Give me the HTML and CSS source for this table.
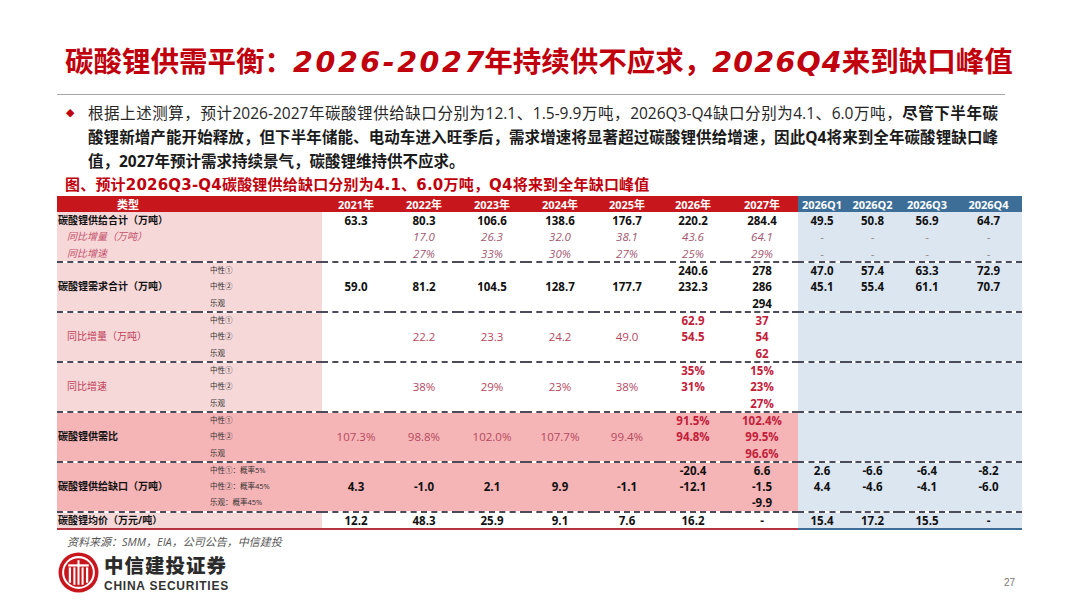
FILE: index.html
```html
<!DOCTYPE html>
<html lang="zh-CN">
<head>
<meta charset="utf-8">
<title>碳酸锂供需平衡</title>
<link rel="stylesheet" href="styles.css">
</head>
<body>
<div class="slide">
  <h1 class="title">碳酸锂供需平衡：<span class="num n1">2026-2027</span>年持续供不应求，<span class="num n2">2026Q4</span>来到缺口峰值</h1>
  <div class="rule"></div>
  <div class="bullet">
    <span class="dia">◆</span>
    <div class="lines">
      <span class="line">根据上述测算，预计2026-2027年碳酸锂供给缺口分别为12.1、1.5-9.9万吨，2026Q3-Q4缺口分别为4.1、6.0万吨，<b>尽管下半年碳</b></span>
      <span class="line"><b>酸锂新增产能开始释放，但下半年储能、电动车进入旺季后，需求增速将显著超过碳酸锂供给增速，因此Q4将来到全年碳酸锂缺口峰</b></span>
      <span class="line last"><b>值，2027年预计需求持续景气，碳酸锂维持供不应求。</b></span>
    </div>
  </div>
  <div class="caption">图、预计2026Q3-Q4碳酸锂供给缺口分别为4.1、6.0万吨，Q4将来到全年缺口峰值</div>
  <table class="tbl">
    <colgroup>
      <col class="c1"><col class="c2">
      <col class="y1"><col class="y1"><col class="y1"><col class="y1"><col class="y2"><col class="y2"><col class="y3">
      <col class="q1"><col class="q2"><col class="q3"><col class="q4">
    </colgroup>
    <thead>
      <tr>
        <th colspan="2" class="hr hl">类型</th>
        <th class="hr">2021年</th><th class="hr">2022年</th><th class="hr">2023年</th><th class="hr">2024年</th><th class="hr">2025年</th><th class="hr">2026年</th><th class="hr">2027年</th>
        <th class="hb">2026Q1</th><th class="hb">2026Q2</th><th class="hb">2026Q3</th><th class="hb">2026Q4</th>
      </tr>
    </thead>
    <tbody class="blk">
      <tr>
        <td colspan="2" class="lab b">碳酸锂供给合计（万吨）</td>
        <td class="b">63.3</td><td class="b">80.3</td><td class="b">106.6</td><td class="b">138.6</td><td class="b">176.7</td><td class="b">220.2</td><td class="b">284.4</td>
        <td class="q b">49.5</td><td class="q b">50.8</td><td class="q b">56.9</td><td class="q b">64.7</td>
      </tr>
      <tr>
        <td colspan="2" class="lab ind itl">同比增量（万吨）</td>
        <td></td><td class="it">17.0</td><td class="it">26.3</td><td class="it">32.0</td><td class="it">38.1</td><td class="it">43.6</td><td class="it">64.1</td>
        <td class="q ds">-</td><td class="q ds">-</td><td class="q ds">-</td><td class="q ds">-</td>
      </tr>
      <tr>
        <td colspan="2" class="lab ind itl">同比增速</td>
        <td></td><td class="it">27%</td><td class="it">33%</td><td class="it">30%</td><td class="it">27%</td><td class="it">25%</td><td class="it">29%</td>
        <td class="q ds">-</td><td class="q ds">-</td><td class="q ds">-</td><td class="q ds">-</td>
      </tr>
    </tbody>
    <tbody class="blk">
      <tr>
        <td rowspan="3" class="lab b">碳酸锂需求合计（万吨）</td><td class="sub">中性①</td>
        <td rowspan="3" class="b">59.0</td><td rowspan="3" class="b">81.2</td><td rowspan="3" class="b">104.5</td><td rowspan="3" class="b">128.7</td><td rowspan="3" class="b">177.7</td>
        <td class="b">240.6</td><td class="b">278</td>
        <td class="q b">47.0</td><td class="q b">57.4</td><td class="q b">63.3</td><td class="q b">72.9</td>
      </tr>
      <tr>
        <td class="sub">中性②</td>
        <td class="b">232.3</td><td class="b">286</td>
        <td class="q b">45.1</td><td class="q b">55.4</td><td class="q b">61.1</td><td class="q b">70.7</td>
      </tr>
      <tr>
        <td class="sub">乐观</td>
        <td></td><td class="b">294</td>
        <td class="q"></td><td class="q"></td><td class="q"></td><td class="q"></td>
      </tr>
    </tbody>
    <tbody class="blk">
      <tr>
        <td rowspan="3" class="lab ind pkl">同比增量（万吨）</td><td class="sub">中性①</td>
        <td rowspan="3"></td><td rowspan="3" class="pk">22.2</td><td rowspan="3" class="pk">23.3</td><td rowspan="3" class="pk">24.2</td><td rowspan="3" class="pk">49.0</td>
        <td class="rb">62.9</td><td class="rb">37</td>
        <td rowspan="3" class="q"></td><td rowspan="3" class="q"></td><td rowspan="3" class="q"></td><td rowspan="3" class="q"></td>
      </tr>
      <tr>
        <td class="sub">中性②</td>
        <td class="rb">54.5</td><td class="rb">54</td>
      </tr>
      <tr>
        <td class="sub">乐观</td>
        <td></td><td class="rb">62</td>
      </tr>
    </tbody>
    <tbody class="blk">
      <tr>
        <td rowspan="3" class="lab ind pkl">同比增速</td><td class="sub">中性①</td>
        <td rowspan="3"></td><td rowspan="3" class="pk">38%</td><td rowspan="3" class="pk">29%</td><td rowspan="3" class="pk">23%</td><td rowspan="3" class="pk">38%</td>
        <td class="rb">35%</td><td class="rb">15%</td>
        <td rowspan="3" class="q"></td><td rowspan="3" class="q"></td><td rowspan="3" class="q"></td><td rowspan="3" class="q"></td>
      </tr>
      <tr>
        <td class="sub">中性②</td>
        <td class="rb">31%</td><td class="rb">23%</td>
      </tr>
      <tr>
        <td class="sub">乐观</td>
        <td></td><td class="rb">27%</td>
      </tr>
    </tbody>
    <tbody class="blk deep">
      <tr>
        <td rowspan="3" class="lab b">碳酸锂供需比</td><td class="sub">中性①</td>
        <td rowspan="3" class="pk">107.3%</td><td rowspan="3" class="pk">98.8%</td><td rowspan="3" class="pk">102.0%</td><td rowspan="3" class="pk">107.7%</td><td rowspan="3" class="pk">99.4%</td>
        <td class="rb">91.5%</td><td class="rb">102.4%</td>
        <td rowspan="3" class="q"></td><td rowspan="3" class="q"></td><td rowspan="3" class="q"></td><td rowspan="3" class="q"></td>
      </tr>
      <tr>
        <td class="sub">中性②</td>
        <td class="rb">94.8%</td><td class="rb">99.5%</td>
      </tr>
      <tr>
        <td class="sub">乐观</td>
        <td></td><td class="rb">96.6%</td>
      </tr>
    </tbody>
    <tbody class="blk deep">
      <tr>
        <td rowspan="3" class="lab b">碳酸锂供给缺口（万吨）</td><td class="sub">中性①：概率5%</td>
        <td rowspan="3" class="b">4.3</td><td rowspan="3" class="b">-1.0</td><td rowspan="3" class="b">2.1</td><td rowspan="3" class="b">9.9</td><td rowspan="3" class="b">-1.1</td>
        <td class="b">-20.4</td><td class="b">6.6</td>
        <td class="q b">2.6</td><td class="q b">-6.6</td><td class="q b">-6.4</td><td class="q b">-8.2</td>
      </tr>
      <tr>
        <td class="sub">中性②：概率45%</td>
        <td class="b">-12.1</td><td class="b">-1.5</td>
        <td class="q b">4.4</td><td class="q b">-4.6</td><td class="q b">-4.1</td><td class="q b">-6.0</td>
      </tr>
      <tr>
        <td class="sub">乐观：概率45%</td>
        <td></td><td class="b">-9.9</td>
        <td class="q"></td><td class="q"></td><td class="q"></td><td class="q"></td>
      </tr>
    </tbody>
    <tbody class="end">
      <tr>
        <td colspan="2" class="lab b">碳酸锂均价（万元/吨）</td>
        <td class="b">12.2</td><td class="b">48.3</td><td class="b">25.9</td><td class="b">9.1</td><td class="b">7.6</td><td class="b">16.2</td><td class="b">-</td>
        <td class="q b">15.4</td><td class="q b">17.2</td><td class="q b">15.5</td><td class="q b">-</td>
      </tr>
    </tbody>
  </table>
  <div class="src">资料来源：SMM，EIA，公司公告，中信建投</div>
  <div class="foot">
    <div class="logo">
      <svg class="emblem" width="41" height="41" viewBox="-20 -20 40 40" aria-hidden="true">
        <circle r="19.5" fill="#c8161d"/>
        <circle r="16" fill="#fff"/>
        <circle r="14" fill="#c8161d"/>
        <rect x="-10" y="-8" width="20" height="2.2" fill="#fff"/>
        <rect x="-9.5" y="-5" width="2.2" height="15" fill="#fff"/>
        <rect x="7.3" y="-5" width="2.2" height="15" fill="#fff"/>
        <rect x="-5" y="-5" width="2" height="17" fill="#fff"/>
        <rect x="3" y="-5" width="2" height="17" fill="#fff"/>
        <rect x="-1" y="-12" width="2" height="24" fill="#fff"/>
      </svg>
      <div class="lt">
        <div class="cn">中信建投证券</div>
        <div class="en">CHINA SECURITIES</div>
      </div>
    </div>
    <div class="pg">27</div>
  </div>
</div>
</body>
</html>
```

FILE: styles.css
```css
* { box-sizing: border-box; margin: 0; padding: 0; }
html, body { width: 1080px; height: 608px; background: #fff; overflow: hidden; }
body { font-family: "Open Sans", "Noto Sans CJK SC", sans-serif; color: #222; }

.slide {
  width: 1080px;
  height: 608px;
  padding: 42px 58px 0 57px;
  display: flex;
  flex-direction: column;
}

.title {
  font-family: "Noto Sans CJK SC", sans-serif;
  font-weight: 700;
  font-size: 28.5px;
  line-height: 36px;
  color: #c0000c;
  padding-left: 8px;
  white-space: nowrap;
}
.title .num {
  font-family: "DejaVu Sans", sans-serif;
  font-style: italic;
  font-weight: 700;
}
.title .n1 { letter-spacing: 2.6px; margin-right: -2.6px; }
.title .n2 { letter-spacing: 1.2px; margin-right: -1.2px; }

.rule { margin-top: 13px; height: 1px; width: 948px; background: #a6a6a6; }

.bullet { display: flex; margin-top: 6px; padding-left: 9px; }
.bullet .dia { color: #c0000c; font-size: 11px; line-height: 24px; width: 22px; font-family: "DejaVu Sans", sans-serif; }
.lines { width: 910px; font-size: 15.5px; line-height: 24px; color: #262626; }
.line { display: block; text-align: justify; text-align-last: justify; }
.line.last { text-align-last: left; }
.lines b { font-weight: 700; color: #1a1a1a; }

.caption {
  margin-top: 2px;
  padding-left: 8px;
  font-family: "DejaVu Sans", "Noto Sans CJK SC", sans-serif;
  font-size: 15px;
  line-height: 20px;
  font-weight: 700;
  color: #c0000c;
  letter-spacing: 0.2px;
  white-space: nowrap;
}

.tbl {
  margin-top: 1px;
  width: 965px;
  border-collapse: collapse;
  table-layout: fixed;
  font-size: 11.5px;
}
.c1 { width: 140px; } .c2 { width: 125px; }
.y1 { width: 68px; } .y2 { width: 66px; } .y3 { width: 72px; }
.q1 { width: 48px; } .q2 { width: 53px; } .q3 { width: 56px; } .q4 { width: 67px; }

.tbl th, .tbl td {
  height: 16.67px;
  padding: 0;
  line-height: 15px;
  text-align: center;
  vertical-align: middle;
  white-space: nowrap;
  overflow: hidden;
}
.tbl th { height: 16px; color: #fff; font-weight: 700; font-size: 11px; }
.hr { background: #c8161d; }
.hb { background: #3d6e98; }
.tbl th.hl { text-align: left; padding-left: 60px; }

.tbl tbody.blk { border-bottom: 2px dashed #4b4b5a; }

.tbl td.lab { background: #f7d8d9; text-align: left; padding-left: 1px; font-size: 10px; }
.tbl td.sub { background: #f7d8d9; text-align: left; padding-left: 13px; font-size: 7.5px; color: #333; }
.tbl td.ind { padding-left: 10px; }
.tbl .deep td { background: #f5b4b6; }
.tbl td.q { background: #dce6f1; }

.b { font-weight: 700; color: #111; }
.it { font-style: italic; color: #a35670; }
.itl { font-style: italic; color: #c4506a; }
.pk { color: #b5495f; }
.pkl { color: #c0405a; }
.rb { font-weight: 700; color: #c2203a; }
.ds { color: #8a8a8a; }

.tbl .end td { border-bottom: 2px solid #b8323f; height: 17px; }
.tbl .end td.q { border-bottom-color: #3d6e98; }

.src {
  margin-top: 4px;
  padding-left: 10px;
  font-size: 11px;
  line-height: 16px;
  font-style: italic;
  color: #555;
}

.foot {
  display: flex;
  justify-content: space-between;
  align-items: flex-end;
  margin-top: 1px;
  width: 958px;
}
.logo { display: flex; align-items: center; gap: 5px; padding-left: 1px; }
.lt { display: flex; flex-direction: column; }
.cn { font-family: "Noto Sans CJK SC", sans-serif; font-weight: 900; font-size: 19.5px; line-height: 28.5px; color: #2b2b2b; letter-spacing: 1px; }
.en { font-family: "Liberation Sans", sans-serif; font-weight: 700; font-size: 12px; line-height: 14px; color: #333; letter-spacing: 0.75px; }
.pg { font-family: "Liberation Sans", sans-serif; font-size: 10px; line-height: 12px; color: #777; padding-bottom: 4px; }
```
